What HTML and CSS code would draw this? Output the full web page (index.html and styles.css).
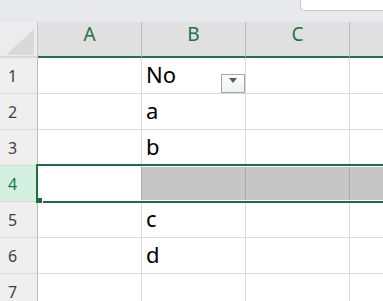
FILE: index.html
```html
<!DOCTYPE html>
<html lang="ja">
<head>
    <meta charset="UTF-8">
    <meta name="viewport" content="width=device-width, initial-scale=1.0">
    <title>Sheet1</title>
    <link rel="stylesheet" href="styles.css">
</head>
<body>
    <div class="topbar">
        <div class="namebox"></div>
    </div>

    <div class="sheet">
        <div class="row head">
            <div class="corner"><div class="corner-tri"></div></div>
            <div class="col-head">A</div>
            <div class="col-head">B</div>
            <div class="col-head">C</div>
            <div class="col-head">D</div>
        </div>

        <div class="row">
            <div class="row-head">1</div>
            <div class="cell"></div>
            <div class="cell filter-cell">
                <span>No</span>
                <button class="filter-btn" type="button"><span class="arrow"></span></button>
            </div>
            <div class="cell"></div>
            <div class="cell"></div>
        </div>
        <div class="row">
            <div class="row-head">2</div>
            <div class="cell"></div>
            <div class="cell">a</div>
            <div class="cell"></div>
            <div class="cell"></div>
        </div>
        <div class="row">
            <div class="row-head">3</div>
            <div class="cell"></div>
            <div class="cell">b</div>
            <div class="cell"></div>
            <div class="cell"></div>
        </div>
        <div class="row selected">
            <div class="row-head">4</div>
            <div class="cell active"></div>
            <div class="cell"></div>
            <div class="cell"></div>
            <div class="cell"></div>
        </div>
        <div class="row">
            <div class="row-head">5</div>
            <div class="cell"></div>
            <div class="cell">c</div>
            <div class="cell"></div>
            <div class="cell"></div>
        </div>
        <div class="row">
            <div class="row-head">6</div>
            <div class="cell"></div>
            <div class="cell">d</div>
            <div class="cell"></div>
            <div class="cell"></div>
        </div>
        <div class="row">
            <div class="row-head">7</div>
            <div class="cell"></div>
            <div class="cell"></div>
            <div class="cell"></div>
            <div class="cell"></div>
        </div>

        <!-- selection frame over row 4 -->
        <div class="selection"></div>
        <div class="fill-handle"></div>
    </div>
</body>
</html>
```

FILE: styles.css
```css
html, body {
    margin: 0;
    overflow: hidden;
}
body {
    font-family: "Noto Sans", "Noto Sans CJK JP", sans-serif;
    background: #fff;
    color: #000;
}
.topbar {
    height: 22px;
    background: #e7e9ec;
    display: flex;
    justify-content: flex-end;
    align-items: flex-start;
}
.namebox {
    width: 82px;
    height: 10px;
    background: #fff;
    border-left: 1px solid #c6cacf;
    border-bottom: 1px solid #c6cacf;
    border-bottom-left-radius: 5px;
}
.sheet {
    position: relative;
    overflow: hidden;
}
.row {
    display: grid;
    grid-template-columns: 38px 104px 104px 104px 104px;
    height: 36px;
}
.corner {
    background: #ececec;
    border-right: 1px solid #c9c9c9;
    border-bottom: 2px solid #d8d8d8;
    display: flex;
    justify-content: flex-end;
    align-items: flex-end;
    padding: 0 3px 1px 0;
}
.corner-tri {
    width: 28px;
    height: 26px;
    background: #d9d9d9;
    clip-path: polygon(100% 0, 100% 100%, 0 100%);
}
.col-head {
    background: #e0e0e0;
    border-right: 1px solid #bdbdbd;
    border-bottom: 2px solid #217346;
    color: #217346;
    font-size: 19px;
    line-height: 24px;
    text-align: center;
}
.row-head {
    background: #efefef;
    border-right: 1px solid #bcbcbc;
    border-bottom: 1px solid #d9d9d9;
    color: #3f3f3f;
    font-size: 16px;
    display: flex;
    align-items: flex-end;
    padding: 0 0 6px 8px;
}
.cell {
    border-right: 1px solid #dadada;
    border-bottom: 1px solid #dadada;
    font-size: 22px;
    display: flex;
    align-items: flex-end;
    padding: 0 3px 4px 4px;
    min-width: 0;
}
.filter-cell {
    justify-content: space-between;
    padding-right: 0;
    padding-bottom: 0;
}
.filter-cell span {
    padding-bottom: 4px;
}
.filter-btn {
    width: 24px;
    height: 19px;
    padding: 3px 0 0;
    border: 1px solid #a6a6a6;
    background: linear-gradient(#ffffff, #eef0f3);
    display: flex;
    justify-content: center;
    align-items: flex-start;
}
.arrow {
    width: 0;
    height: 0;
    border-left: 4px solid transparent;
    border-right: 4px solid transparent;
    border-top: 5px solid #5a5a5a;
}
.selected .row-head {
    background: #d3f0e0;
    color: #217346;
}
.selected .cell {
    background: #c6c6c6;
    border-right-color: #a9a9a9;
}
.selected .cell.active {
    background: #fff;
}
.selection {
    position: absolute;
    top: 142px;
    left: 36px;
    right: -20px;
    height: 39px;
    box-sizing: border-box;
    border: 2px solid #1e6e42;
    box-shadow: inset 0 0 0 1px #fff;
}
.fill-handle {
    position: absolute;
    top: 176px;
    left: 36px;
    width: 6px;
    height: 5px;
    background: #1e6e42;
    box-shadow: 1px 0 0 #fff;
}
```
